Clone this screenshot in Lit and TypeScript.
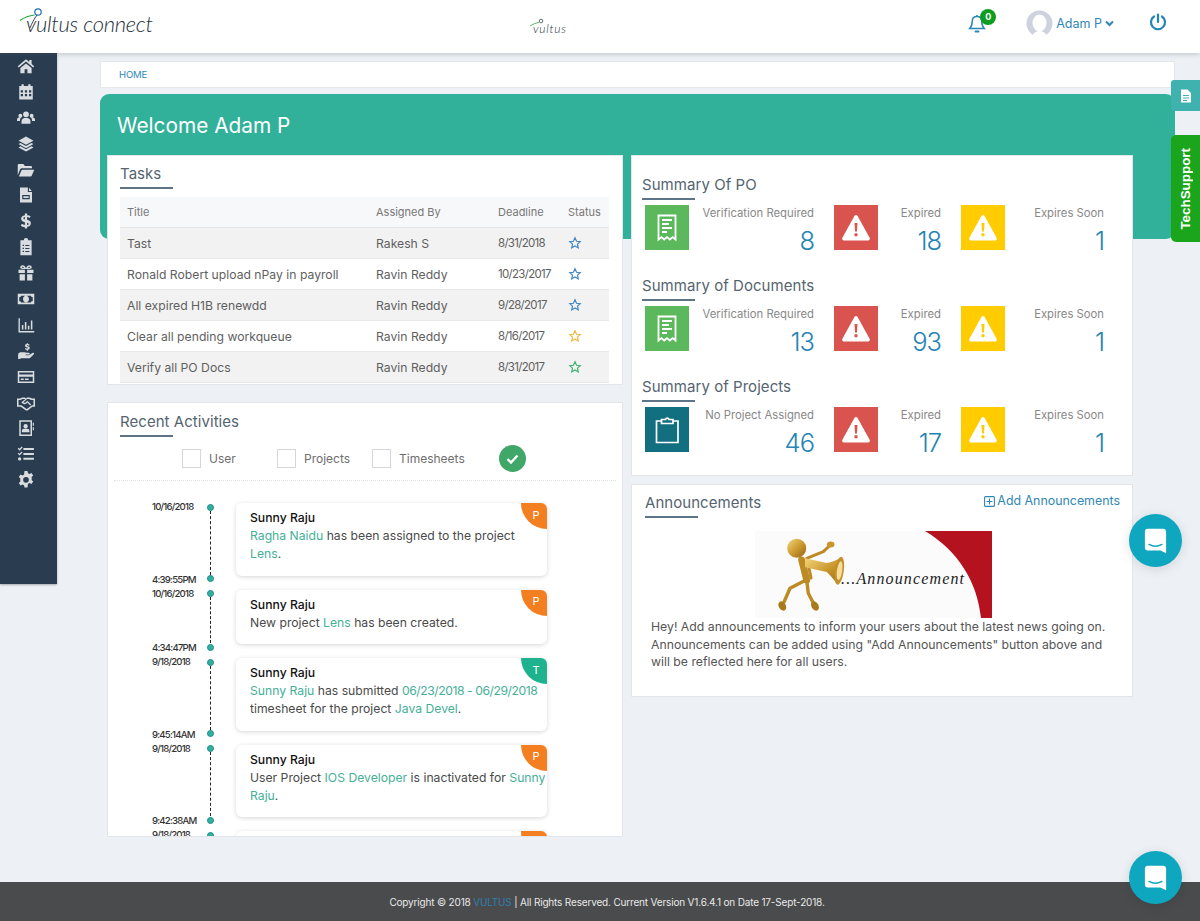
import { LitElement, css, html, svg } from 'lit';
import { customElement, state } from 'lit/decorators.js';

const SIDE_ICONS = [
  // home
  svg`<path d="M12 3 1 12.3l1.4 1.7L12 6l9.6 8 1.4-1.700L19.500 9.200V4h-3.200v2.500z"/><path d="M4.500 14.800V21.500h5.600v-5.200h3.800v5.200h5.600v-6.700L12 8.600z"/>`,
  // calendar
  svg`<path fill-rule="evenodd" d="M6 1.500h3V4h6V1.500h3V4h3v18H3V4h3zM5 9.500v3h3v-3zm5.500 0v3h3v-3zm5.500 0v3h3v-3zM5 14.500v3h3v-3zm5.500 0v3h3v-3zm5.500 0v3h3v-3z"/>`,
  // users
  svg`<circle cx="12" cy="7" r="3.800"/><circle cx="4.500" cy="9" r="2.600"/><circle cx="19.500" cy="9" r="2.600"/><path d="M6 19.500v-3.200c0-3 2.400-4.800 6-4.800s6 1.800 6 4.800v3.200zM0 16v-2c0-1.500 1.400-3 3.500-3h2.200C4.500 12.200 4 13.800 4 16zM24 16v-2c0-1.500-1.400-3-3.500-3h-2.200c1.200 1.200 1.700 2.800 1.700 5z"/>`,
  // layers
  svg`<path d="M12 2 2 7.500 12 13l10-5.500z"/><path d="M4.800 10.500 2 12l10 5.500L22 12l-2.800-1.500L12 14.500z"/><path d="M4.800 15 2 16.500 12 22l10-5.500-2.800-1.500-7.200 4z"/>`,
  // folder open
  svg`<path d="M1 19V5.500C1 4.700 1.700 4 2.500 4h6l2 2.500h8c.8 0 1.500.7 1.500 1.500v1.500H6.500c-1 0-1.800.5-2.300 1.400z"/><path d="M2.500 20.500 6 12.300c.2-.5.7-.8 1.300-.8H23l-3.400 8.200c-.2.500-.7.800-1.300.8z"/>`,
  // file
  svg`<path fill-rule="evenodd" d="M4 2h10.500v6H20v14H4zM16 2.300 19.700 6.500H16zM7 12v5.500h10V12zm1.500 1.500h7V16h-7z"/>`,
  // dollar
  svg`<path d="M13.500 2h-3v2.300C7.300 4.700 5.500 6.600 5.500 9c0 2.700 2.100 3.800 5 4.500v3.900c-1.700-.2-3-.8-4-1.600l-1.500 2.500c1.400 1 3.300 1.700 5.500 1.900V22h3v-2.300c3.200-.4 5-2.300 5-4.800 0-2.800-2.100-3.900-5-4.600V6.800c1.200.2 2.300.6 3.300 1.300l1.400-2.500c-1.300-.8-2.900-1.300-4.700-1.400zm-3 4.800v3c-1.400-.4-2-.8-2-1.500s.7-1.300 2-1.500zm3 7.500c1.400.4 2 .9 2 1.600s-.7 1.300-2 1.500z"/>`,
  // clipboard list
  svg`<path fill-rule="evenodd" d="M9 3a3 3 0 0 1 6 0h4.500v20h-15V3zM7.500 9v1.800h1.800V9zm3.500.2v1.500h5.500V9.200zM7.500 13v1.800h1.800V13zm3.500.2v1.500h5.500v-1.500zM7.500 17v1.800h1.800V17zm3.500.2v1.500h5.500v-1.500z"/>`,
  // gift
  svg`<path d="M2 7.500h8.500V12H2zM13.500 7.500H22V12h-8.500zM3.500 13.500h7V22h-7zM13.500 13.500h7V22h-7z"/><path fill-rule="evenodd" d="M7.500 1.500c2 0 3.500 1.600 4.500 4 1-2.400 2.500-4 4.500-4 2 0 3.200 1.300 3.200 2.800S18.500 6.500 16.500 6.500h-9c-2 0-3.200-.7-3.200-2.200s1.200-2.800 3.200-2.800zm0 2c-.7 0-1.100.3-1.100.8s.4.700 1.100.7h2.200c-.6-1-1.300-1.500-2.200-1.500zm9 0c-.9 0-1.600.5-2.200 1.500h2.200c.7 0 1.100-.2 1.100-.7s-.4-.8-1.100-.8z"/>`,
  // money bill
  svg`<path fill-rule="evenodd" d="M1 5h22v14H1zM3 9.500v5c1.400 0 2.500 1 2.500 2h13c0-1 1.100-2 2.500-2v-5c-1.400 0-2.500-1-2.500-2h-13c0 1-1.100 2-2.500 2zM12 7.500c2.300 0 4 2 4 4.500s-1.700 4.500-4 4.500-4-2-4-4.500 1.700-4.500 4-4.500z"/>`,
  // chart
  svg`<path d="M2 3h1.800v17H23v2H2z"/><path d="M6.500 12h2v6h-2zM10.500 8h2v10h-2zM14.500 13h2v5h-2zM18.500 6h2v12h-2z"/>`,
  // hand holding dollar
  svg`<path d="M1.500 17c0-2 1.500-3.500 3.500-3.500h5c1 0 1.800.2 2.500.8h3c1 0 1.500.5 1.500 1.200s-.5 1.200-1.500 1.200h-4v.8h4.500l4.500-3c.8-.5 1.600-.3 2 .2.400.6.200 1.300-.4 1.800L17 21.500H5.500l-2 1h-2z"/><path d="M13 1.500h1.600v1.300c1 .1 1.800.5 2.300.9l-.8 1.300c-.6-.4-1.300-.7-2-.7-.7 0-1.100.2-1.100.6 0 .4.500.6 1.500.9 1.500.4 2.500 1 2.500 2.300 0 1.200-.9 2-2.400 2.200v1.200H13v-1.200c-1-.1-2-.5-2.600-1l.8-1.300c.7.500 1.500.8 2.200.8.800 0 1.200-.3 1.200-.7 0-.4-.5-.7-1.500-1-1.500-.4-2.400-1-2.400-2.200 0-1.100.8-1.900 2.300-2.100z"/>`,
  // credit card
  svg`<path fill-rule="evenodd" d="M1 4h22v16H1zM3 6v2.500h18V6zM3 11.500V18h18v-6.500zM5 14h4v2H5zm5.500 0h5v2h-5z"/>`,
  // handshake
  svg`<path fill-rule="evenodd" d="M0 6h4l3-1.200h3.500L12 6l1.500-1.200H17L20 6h4v11h-3.500l-6 4.500c-1 .6-2 .6-3 0L5 17H0zM2 8v7h3.800l6.500 4.800c.4.300.9.300 1.200 0l5.700-4.300.8-.5h2V8h-3l-3-1.300h-2.500L8.500 11c1 1 2.300 1 3.300 0l2-2 5 5-1.200 1.200-3.800-3.800-.8.800c-2 1.800-4.500 1.800-6.400-.2l-.8-1L11.300 6.800H7.500L4.500 8z"/>`,
  // address book
  svg`<path fill-rule="evenodd" d="M3 1.500h17v21H3zM5 3.500v17h13v-17zM21 5h1.500v4H21zM21 11h1.500v4H21z"/><circle cx="11.500" cy="9.500" r="2.800"/><path d="M6.500 17.500v-1.800c0-1.800 1.600-3 5-3s5 1.200 5 3v1.800z"/>`,
  // tasks
  svg`<path d="M8.500 4h14v2.800h-14zM8.500 10.500h14v2.800h-14zM8.500 17h14v2.800h-14z"/><path d="M1 5l1.300-1.200L3.500 5l2.700-3L7.500 3.200 3.500 7.500zM1 11.500l1.300-1.200 1.200 1.200 2.700-3 1.300 1.200L3.500 14z"/><circle cx="3.500" cy="18.500" r="2.200"/>`,
  // cog
  svg`<path fill-rule="evenodd" d="M10 1h4l.6 3c.7.200 1.300.500 1.900.9l2.800-1.300 2.300 3.300-2.200 2c.2.700.3 1.400.3 2.100s-.1 1.400-.3 2.100l2.200 2-2.300 3.300-2.800-1.300c-.6.400-1.200.7-1.900.9L14 23h-4l-.6-3c-.7-.2-1.300-.5-1.900-.9l-2.800 1.300-2.300-3.300 2.200-2C4.400 14.400 4.300 13.700 4.300 13s.1-1.400.3-2.100l-2.200-2 2.300-3.300 2.800 1.300c.6-.4 1.200-.7 1.900-.9zM12 9a3.800 3.800 0 1 0 0 7.600A3.800 3.800 0 0 0 12 9z" transform="translate(0 -1)"/>`,
];

const warn = (fill: string) => html`<svg viewBox="0 0 44 45" width="44" height="45">
  <path d="M22 10c.7 0 1.200.3 1.600.9l12 21.900c.7 1.300-.1 2.700-1.500 2.700H9.900c-1.400 0-2.200-1.400-1.500-2.700l12-21.900c.4-.6.900-.9 1.600-.9z" fill="#fff" />
  <path d="M20.500 18h3l-.5 8.500h-2z" fill=${fill} />
  <circle cx="22" cy="29.800" r="1.700" fill=${fill} />
</svg>`;

const receipt = html`<svg viewBox="0 0 44 45" width="44" height="45" fill="none" stroke="#fff" stroke-width="1.800">
  <path d="M13.500 10.500h17v24l-2.800-2.400-2.900 2.400-2.800-2.400-2.800 2.400-2.800-2.400-2.900 2.400z" />
  <path d="M17 15h10M17 19h7M17 23h10M17 27h5" />
</svg>`;

const clipboard = html`<svg viewBox="0 0 44 45" width="44" height="45" fill="none" stroke="#fff" stroke-width="1.700">
  <path d="M16.500 14H11.500V35.500H33V14H28" />
  <path d="M16.500 16.500v-4h4a1.800 1.800 0 0 1 3.500 0H28v4z" />
</svg>`;

const star = (color: string) => html`<svg viewBox="0 0 24 24" width="14" height="14" fill="none" stroke=${color} stroke-width="2">
  <path d="m12 3 2.700 6 6.300.7-4.700 4.300 1.300 6.400L12 17.200l-5.600 3.200 1.300-6.400L3 9.700 9.300 9z" />
</svg>`;

const chatBubble = html`<svg viewBox="0 0 54 54" width="54" height="54">
  <path d="M19 14.500h16c1.600 0 2.800 1.200 2.800 2.800v22.200l-5.800-2.700H19c-1.600 0-2.800-1.200-2.800-2.800V17.300c0-1.600 1.200-2.800 2.800-2.800z" fill="#fff" />
  <path d="M20.500 30.500c4 2.300 9 2.300 13 0" fill="none" stroke="#0fa7bf" stroke-width="1.500" stroke-linecap="round" />
</svg>`;

type Piece = string | { link: string; tight?: boolean };
const ACTIVITIES: { date: string; time: string; badge: string; lines: Piece[][] }[] = [
  {
    date: '10/16/2018', time: '4:39:55PM', badge: 'P',
    lines: [[{ link: 'Ragha Naidu' }, ' has been assigned to the project'], [{ link: 'Lens' }, '.']],
  },
  {
    date: '10/16/2018', time: '4:34:47PM', badge: 'P',
    lines: [['New project ', { link: 'Lens' }, ' has been created.']],
  },
  {
    date: '9/18/2018', time: '9:45:14AM', badge: 'T',
    lines: [
      [{ link: 'Sunny Raju' }, ' has submitted ', { link: '06/23/2018 - 06/29/2018', tight: true }],
      ['timesheet for the project ', { link: 'Java Devel' }, '.'],
    ],
  },
  {
    date: '9/18/2018', time: '9:42:38AM', badge: 'P',
    lines: [['User Project ', { link: 'IOS Developer' }, ' is inactivated for ', { link: 'Sunny' }], [{ link: 'Raju' }, '.']],
  },
  { date: '9/18/2018', time: '', badge: 'P', lines: [] },
];

@customElement('app-root')
export class AppRoot extends LitElement {
  static styles = css`
    :host {
      display: flex;
      flex-direction: column;
      position: relative;
      width: 1200px;
      height: 921px;
      overflow: hidden;
      background: #edf1f5;
      font-family: Inter, 'Open Sans', sans-serif;
      color: #555;
    }

    .topbar {
      flex: none;
      height: 53px;
      display: flex;
      align-items: center;
      background: #fff;
      box-shadow: 0 1px 5px rgba(70, 90, 100, 0.3);
      position: relative;
      z-index: 2;
    }
    .logo-big {
      margin-left: 19px;
      align-self: flex-start;
      display: block;
    }
    .logo-small {
      margin-left: 370px;
      margin-top: 16px;
      align-self: flex-start;
      display: block;
    }
    .logo-text {
      font-family: Lato, sans-serif;
      font-style: italic;
      font-weight: 300;
      fill: #26303a;
    }
    .top-right {
      margin-left: auto;
      margin-top: -6px;
      display: flex;
      align-items: center;
    }
    .bell {
      position: relative;
      width: 18px;
      height: 20px;
      margin-right: 40px;
    }
    .bell span {
      position: absolute;
      left: 12px;
      top: -5px;
      width: 16px;
      height: 16px;
      border-radius: 50%;
      background: #0f9d1f;
      color: #fff;
      font-size: 9px;
      font-weight: 700;
      display: flex;
      align-items: center;
      justify-content: center;
    }
    .user {
      display: flex;
      align-items: center;
      gap: 3px;
      color: #2f87b5;
      font-size: 12.5px;
      margin-right: 35px;
    }
    .user svg {
      display: block;
    }
    .power {
      display: block;
      margin-right: 33px;
      margin-top: -3px;
    }

    .body {
      flex: 1;
      display: flex;
      min-height: 0;
    }
    .sidebar {
      flex: none;
      width: 57px;
      height: 531px;
      background: #2a3c50;
      box-sizing: border-box;
      display: flex;
      flex-direction: column;
      box-shadow: 0 1px 2px rgba(0, 0, 0, 0.3);
    }
    .side-item {
      height: 25.9px;
      display: flex;
      align-items: center;
      padding-left: 17px;
    }
    .side-item svg {
      width: 18px;
      height: 18px;
      fill: #d9dde0;
      display: block;
    }

    .main {
      width: 1075px;
      margin-left: 43px;
      padding-top: 8px;
      min-height: 0;
      display: flex;
      flex-direction: column;
    }
    .crumb {
      flex: none;
      height: 27px;
      box-sizing: border-box;
      background: #fff;
      border: 1px solid #e3e7ea;
      padding-left: 18px;
      display: flex;
      align-items: center;
      font-size: 9.5px;
      color: #2f87b5;
      letter-spacing: -0.1px;
    }
    .banner {
      flex: none;
      margin-top: 6px;
      height: 145px;
      box-sizing: border-box;
      padding: 20px 17px;
      background: #31b09a;
      border-radius: 9px;
      color: #fff;
      font-size: 20.8px;
      line-height: 24px;
    }
    .cols {
      margin-top: -84px;
      padding: 0 41px 0 7px;
      display: grid;
      grid-template-columns: 516px 502px;
      gap: 8px;
      align-items: start;
    }
    .col {
      display: flex;
      flex-direction: column;
    }
    .left {
      gap: 17px;
    }
    .right {
      gap: 8px;
    }
    .card {
      background: #fff;
      border: 1px solid #e2e6ea;
      box-sizing: border-box;
    }
    .title {
      font-size: 15px;
      letter-spacing: 0.05px;
      color: #556470;
      line-height: 18px;
    }
    .title::after {
      content: '';
      display: block;
      width: 53px;
      height: 2px;
      margin-top: 4px;
      background: #5d7486;
    }

    .tasks {
      height: 230px;
      padding: 9px 13px 0 12px;
    }
    table {
      width: 489px;
      margin-top: 8px;
      border-collapse: collapse;
      table-layout: fixed;
      font-size: 12.2px;
    }
    th {
      height: 30px;
      padding: 0 0 0 7px;
      font-weight: 400;
      font-size: 11px;
      text-align: left;
      color: #777;
      background: #f7f8fa;
      border-bottom: 1px solid #e4e6e8;
    }
    td {
      height: 30px;
      padding: 0 0 0 7px;
      color: #5f5f5f;
      border-bottom: 1px solid #e8e8e8;
      white-space: nowrap;
    }
    tr:nth-child(odd) td {
      background: #f2f2f2;
    }
    td.due {
      font-size: 11.5px;
      letter-spacing: -0.7px;
    }
    td svg {
      display: block;
    }

    .recent {
      height: 435px;
      padding-top: 10px;
      overflow: hidden;
      display: flex;
      flex-direction: column;
    }
    .recent .title {
      margin-left: 12px;
    }
    .filters {
      flex: none;
      margin: 10px 6px 0;
      height: 33px;
      border-bottom: 1px dotted #dfe3e6;
      box-sizing: content-box;
      display: flex;
      align-items: flex-start;
      padding-left: 68px;
      font-size: 12px;
      color: #6e6e6e;
    }
    .filter {
      display: flex;
      align-items: center;
      height: 22px;
    }
    .box {
      width: 17px;
      height: 17px;
      border: 1px solid #d4d6d8;
      margin-right: 8px;
    }
    .ok {
      width: 27px;
      height: 27px;
      border-radius: 50%;
      background: #3fa767;
      display: flex;
      align-items: center;
      justify-content: center;
      margin-top: -2px;
    }
    .feed {
      flex: 1;
      min-height: 0;
      padding-top: 22px;
      overflow: hidden;
      display: flex;
      flex-direction: column;
      gap: 14px;
    }
    .item {
      flex: none;
      display: flex;
    }
    .stamp {
      flex: none;
      width: 55px;
      margin: -2px 0 -10px 44px;
      display: flex;
      flex-direction: column;
      justify-content: space-between;
      font-size: 9.6px;
      font-weight: 500;
      line-height: 12px;
      color: #333;
      letter-spacing: -0.8px;
    }
    .rail {
      flex: none;
      width: 10px;
      margin: 0 0 -6.5px -2px;
      display: flex;
      flex-direction: column;
      align-items: center;
    }
    .rail i {
      flex: none;
      width: 7px;
      height: 7px;
      border-radius: 50%;
      background: #31b09a;
      border: 0.5px solid #208a94;
      box-sizing: border-box;
      margin-top: 0.5px;
    }
    .rail b {
      flex: 1;
      border-left: 1px dashed #222;
    }
    .note {
      flex: none;
      position: relative;
      width: 311px;
      min-height: 54px;
      margin-left: 21px;
      box-sizing: border-box;
      padding: 6px 8px 12.5px 14px;
      background: #fff;
      border-radius: 6px;
      box-shadow: 0 1px 4px rgba(60, 70, 80, 0.22);
      overflow: hidden;
      font-size: 12.2px;
      line-height: 18px;
      color: #4a4a4a;
      white-space: nowrap;
    }
    .note strong {
      display: block;
      font-weight: 500;
      color: #111;
    }
    .note a {
      color: #45b097;
    }
    .note a.tight {
      letter-spacing: -0.45px;
    }
    .corner {
      position: absolute;
      right: 0;
      top: 0;
      width: 26px;
      height: 26px;
      border-bottom-left-radius: 26px;
      background: #f47f20;
      color: #fff;
      font-size: 11px;
      display: flex;
      align-items: center;
      justify-content: center;
      padding: 0 0 3px 4px;
      box-sizing: border-box;
    }
    .corner.t {
      background: #1fb28f;
    }

    .summary {
      height: 321px;
      padding: 20px 10px 0 10px;
      display: flex;
      flex-direction: column;
      gap: 21px;
    }
    .sum-row {
      display: grid;
      grid-template-columns: 169px 107px 143px;
      gap: 20px;
      margin: 5px 0 0 3px;
    }
    .stat {
      display: flex;
    }
    .tile {
      flex: none;
      width: 44px;
      height: 45px;
    }
    .tile.green {
      background: #5cb85c;
    }
    .tile.red {
      background: #d9534f;
    }
    .tile.yellow {
      background: #ffcc00;
    }
    .tile.teal {
      background: #126f80;
    }
    .stat-text {
      flex: 1;
      text-align: right;
      font-size: 11.3px;
      color: #888;
      line-height: 16px;
    }
    .stat-text div {
      font-size: 25.5px;
      line-height: 30px;
      margin-top: 5px;
      color: #2484b4;
      font-weight: 300;
      letter-spacing: -1px;
    }

    .announce {
      height: 213px;
      padding: 9px 13px 0 13px;
    }
    .ann-head {
      display: flex;
      justify-content: space-between;
      align-items: flex-start;
    }
    .add {
      display: flex;
      align-items: center;
      gap: 2px;
      margin-right: -1px;
      font-size: 12.4px;
      line-height: 14px;
      color: #2f87b5;
    }
    .ann-pic {
      display: block;
      margin: 13px 0 0 110px;
    }
    .ann-text {
      margin: 0 0 0 6px;
      font-size: 12.25px;
      line-height: 17.7px;
      color: #555;
      white-space: nowrap;
    }

    .footer {
      flex: none;
      height: 39px;
      background: #4a4b4d;
      color: #e9e9e9;
      font-size: 10px;
      letter-spacing: -0.17px;
      display: flex;
      align-items: center;
      justify-content: center;
      padding: 1px 0 0 14px;
      box-sizing: border-box;
      white-space: pre;
    }
    .footer a {
      color: #2e7fae;
    }

    .doc-tab {
      position: absolute;
      left: 1171px;
      top: 80px;
      width: 29px;
      height: 31px;
      background: #3fb1ae;
      border-radius: 3px 0 0 3px;
      display: flex;
      align-items: center;
      justify-content: center;
    }
    .tech-tab {
      position: absolute;
      left: 1171px;
      top: 135px;
      width: 29px;
      height: 107px;
      background: #1aa51d;
      border-radius: 5px 0 0 5px;
      display: flex;
      align-items: center;
      justify-content: center;
    }
    .tech-tab span {
      writing-mode: vertical-rl;
      transform: rotate(180deg);
      color: #fff;
      font-family: 'Liberation Sans', sans-serif;
      font-weight: 700;
      font-size: 13.4px;
    }
    .chat {
      position: absolute;
      left: 1129px;
      width: 53px;
      height: 53px;
      border-radius: 50%;
      background: #0fa7bf;
      box-shadow: 0 2px 12px rgba(0, 0, 0, 0.12);
      display: flex;
      align-items: center;
      justify-content: center;
    }
    .chat.one {
      top: 514px;
    }
    .chat.two {
      top: 851px;
    }
  `;

  @state() tasks = [
    { title: 'Tast', by: 'Rakesh S', due: '8/31/2018', star: '#3f86c6' },
    { title: 'Ronald Robert upload nPay in payroll', by: 'Ravin Reddy', due: '10/23/2017', star: '#3f86c6' },
    { title: 'All expired H1B renewdd', by: 'Ravin Reddy', due: '9/28/2017', star: '#3f86c6' },
    { title: 'Clear all pending workqueue', by: 'Ravin Reddy', due: '8/16/2017', star: '#efb73e' },
    { title: 'Verify all PO Docs', by: 'Ravin Reddy', due: '8/31/2017', star: '#3cb371' },
  ];

  @state() summaries = [
    { title: 'Summary Of PO', tile: 'green', icon: receipt, label: 'Verification Required', nums: ['8', '18', '1'] },
    { title: 'Summary of Documents', tile: 'green', icon: receipt, label: 'Verification Required', nums: ['13', '93', '1'] },
    { title: 'Summary of Projects', tile: 'teal', icon: clipboard, label: 'No Project Assigned', nums: ['46', '17', '1'] },
  ];

  renderTopbar() {
    return html`<header class="topbar">
      <svg class="logo-big" width="140" height="40" viewBox="0 0 140 40">
        <text class="logo-text" x="7" y="32" font-size="22" textLength="127">vultus connect</text>
        <path d="M1 20.500C6 17 11 15.500 15.500 15" fill="none" stroke="#2aa63a" stroke-width="1.200" />
        <path d="M11 28C13 23 15 19 18 15" fill="none" stroke="#26303a" stroke-width="0.900" />
        <circle cx="19" cy="12" r="3.200" fill="#fff" stroke="#1a6fb5" stroke-width="1.200" />
      </svg>
      <svg class="logo-small" width="40" height="20" viewBox="0 0 40 20">
        <text class="logo-text" x="4" y="17" font-size="12" textLength="33">vultus</text>
        <path d="M1 10C4 8 7 7 10 6.500" fill="none" stroke="#2aa63a" stroke-width="0.800" />
        <circle cx="12" cy="5" r="1.800" fill="#fff" stroke="#26303a" stroke-width="0.700" />
      </svg>
      <div class="top-right">
        <div class="bell">
          <svg viewBox="0 0 18 20" width="18" height="20" fill="none" stroke="#2b87b8" stroke-width="1.500">
            <path d="M9 2.500c-3 0-4.800 2.200-4.800 5 0 4-1 5.500-2.500 7h14.600c-1.500-1.500-2.500-3-2.500-7 0-2.800-1.800-5-4.800-5z" />
            <path d="M7.500 17.500h3" stroke-linecap="round" stroke-width="2" />
            <path d="M9 1v1.500" />
          </svg>
          <span>0</span>
        </div>
        <div class="user">
          <svg width="27" height="27" viewBox="0 0 27 27">
            <circle cx="13.500" cy="13.500" r="13" fill="#cdd2de" />
            <ellipse cx="13.500" cy="13" rx="7" ry="8.500" fill="#fff" />
            <path d="M6 27c1-4 4-6 7.500-6s6.500 2 7.500 6z" fill="#fff" />
          </svg>
          <span>Adam P</span>
          <svg width="9" height="7" viewBox="0 0 9 7" fill="none" stroke="#2f87b5" stroke-width="2">
            <path d="m1 1.500 3.500 3.500L8 1.500" />
          </svg>
        </div>
        <svg class="power" width="18" height="18" viewBox="0 0 18 18" fill="none" stroke="#2484b9" stroke-width="2.200" stroke-linecap="round">
          <path d="M9 1.500v7.500" />
          <path d="M5 3.500a7 7 0 1 0 8 0" />
        </svg>
      </div>
    </header>`;
  }

  renderTasks() {
    return html`<section class="card tasks">
      <div class="title">Tasks</div>
      <table>
        <colgroup>
          <col style="width:249px" /><col style="width:122px" /><col style="width:70px" /><col style="width:48px" />
        </colgroup>
        <thead>
          <tr><th>Title</th><th>Assigned By</th><th>Deadline</th><th>Status</th></tr>
        </thead>
        <tbody>
          ${this.tasks.map(
            t => html`<tr>
              <td>${t.title}</td><td>${t.by}</td><td class="due">${t.due}</td><td>${star(t.star)}</td>
            </tr>`,
          )}
        </tbody>
      </table>
    </section>`;
  }

  renderRecent() {
    return html`<section class="card recent">
      <div class="title">Recent Activities</div>
      <div class="filters">
        <div class="filter" style="width:95px"><span class="box"></span>User</div>
        <div class="filter" style="width:95px"><span class="box"></span>Projects</div>
        <div class="filter" style="width:127px"><span class="box"></span>Timesheets</div>
        <div class="ok">
          <svg width="13" height="10" viewBox="0 0 13 10" fill="none" stroke="#fff" stroke-width="2.400"><path d="m1.500 5 3.500 3.500 6.500-7" /></svg>
        </div>
      </div>
      <div class="feed">
        ${ACTIVITIES.map(
          a => html`<div class="item">
            <div class="stamp"><span>${a.date}</span><span>${a.time}</span></div>
            <div class="rail"><i></i><b></b><i></i></div>
            <div class="note">
              ${a.lines.length ? html`<strong>Sunny Raju</strong>` : ''}
              ${a.lines.map(
                line => html`<div>
                  ${line.map(p => (typeof p === 'string' ? p : html`<a class=${p.tight ? 'tight' : ''}>${p.link}</a>`))}
                </div>`,
              )}
              <span class="corner ${a.badge === 'T' ? 't' : ''}">${a.badge}</span>
            </div>
          </div>`,
        )}
      </div>
    </section>`;
  }

  renderSummary() {
    return html`<section class="card summary">
      ${this.summaries.map(
        s => html`<div>
          <div class="title">${s.title}</div>
          <div class="sum-row">
            <div class="stat">
              <div class="tile ${s.tile}">${s.icon}</div>
              <div class="stat-text">${s.label}<div>${s.nums[0]}</div></div>
            </div>
            <div class="stat">
              <div class="tile red">${warn('#d9534f')}</div>
              <div class="stat-text">Expired<div>${s.nums[1]}</div></div>
            </div>
            <div class="stat">
              <div class="tile yellow">${warn('#ffcc00')}</div>
              <div class="stat-text">Expires Soon<div>${s.nums[2]}</div></div>
            </div>
          </div>
        </div>`,
      )}
    </section>`;
  }

  renderAnnouncePicture() {
    return html`<svg class="ann-pic" width="237" height="87" viewBox="0 0 237 87">
      <defs>
        <linearGradient id="gold" x1="0" y1="0" x2="1" y2="1">
          <stop offset="0" stop-color="#f4d67a" />
          <stop offset="0.55" stop-color="#c9962b" />
          <stop offset="1" stop-color="#8f6516" />
        </linearGradient>
      </defs>
      <rect width="237" height="87" fill="#fbfbfb" />
      <path d="M170 0h67v87h-11C222 50 203 20 170 0z" fill="#b5121f" />
      <g fill="none" stroke="#bd8a24" stroke-linecap="round" stroke-linejoin="round">
        <path d="M46.700 29 51.700 49" stroke-width="7" />
        <path d="M51 49 35 57.300 29 71" stroke-width="3.400" />
        <path d="M51.700 49 53.300 62.300 58.300 72" stroke-width="3.400" />
        <path d="M51.700 27.300 68.300 20.700 76 13.500" stroke-width="3" />
        <path d="M54 37 56 47" stroke-width="3" />
      </g>
      <ellipse cx="27.300" cy="75" rx="3.500" ry="5" transform="rotate(-30 27.300 75)" fill="#a87a1c" />
      <ellipse cx="60" cy="75" rx="3.500" ry="5" transform="rotate(-30 60 75)" fill="#a87a1c" />
      <ellipse cx="75.700" cy="13.500" rx="3.800" ry="3" fill="#c9962b" />
      <circle cx="41.700" cy="17.300" r="9.500" fill="url(#gold)" />
      <path d="M50 27.300 71.700 32Q79 31 86.700 26.300L83.300 54Q76 45 71.700 41L50 36.300z" fill="url(#gold)" />
      <ellipse cx="84.300" cy="39.700" rx="4.500" ry="14" transform="rotate(8 84.300 39.700)" fill="#c4902a" />
      <ellipse cx="84.600" cy="39.700" rx="2.600" ry="9.500" transform="rotate(8 84.600 39.700)" fill="#f6de9a" />
      <text x="86" y="53" font-family="'Liberation Serif', serif" font-style="italic" font-size="16" fill="#222" textLength="123">...Announcement</text>
    </svg>`;
  }

  renderAnnounce() {
    return html`<section class="card announce">
      <div class="ann-head">
        <div class="title">Announcements</div>
        <div class="add">
          <svg width="11" height="11" viewBox="0 0 11 11" fill="none" stroke="#2f87b5" stroke-width="1.100">
            <rect x="0.600" y="0.600" width="9.800" height="9.800" rx="1" />
            <path d="M5.500 2.500v6M2.500 5.500h6" />
          </svg>
          Add Announcements
        </div>
      </div>
      ${this.renderAnnouncePicture()}
      <p class="ann-text">
        Hey! Add announcements to inform your users about the latest news going on.<br />
        Announcements can be added using "Add Announcements" button above and<br />
        will be reflected here for all users.
      </p>
    </section>`;
  }

  render() {
    return html`
      ${this.renderTopbar()}
      <div class="body">
        <nav class="sidebar">
          ${SIDE_ICONS.map(i => html`<div class="side-item"><svg viewBox="0 0 24 24">${i}</svg></div>`)}
        </nav>
        <main class="main">
          <div class="crumb">HOME</div>
          <div class="banner">Welcome Adam P</div>
          <div class="cols">
            <div class="col left">${this.renderTasks()} ${this.renderRecent()}</div>
            <div class="col right">${this.renderSummary()} ${this.renderAnnounce()}</div>
          </div>
        </main>
      </div>
      <footer class="footer"><span>Copyright © 2018 <a>VULTUS</a> | All Rights Reserved. Current Version V1.6.4.1 on Date 17-Sept-2018.</span></footer>

      <div class="doc-tab">
        <svg width="12" height="14" viewBox="0 0 12 14" fill="#fff">
          <path fill-rule="evenodd" d="M1 .5h6.500L11 4v9.500H1zM3 6v1h6V6zm0 2.500v1h6v-1zm0 2.500v1h4v-1z" />
        </svg>
      </div>
      <div class="tech-tab"><span>TechSupport</span></div>
      <div class="chat one">${chatBubble}</div>
      <div class="chat two">${chatBubble}</div>
    `;
  }
}
